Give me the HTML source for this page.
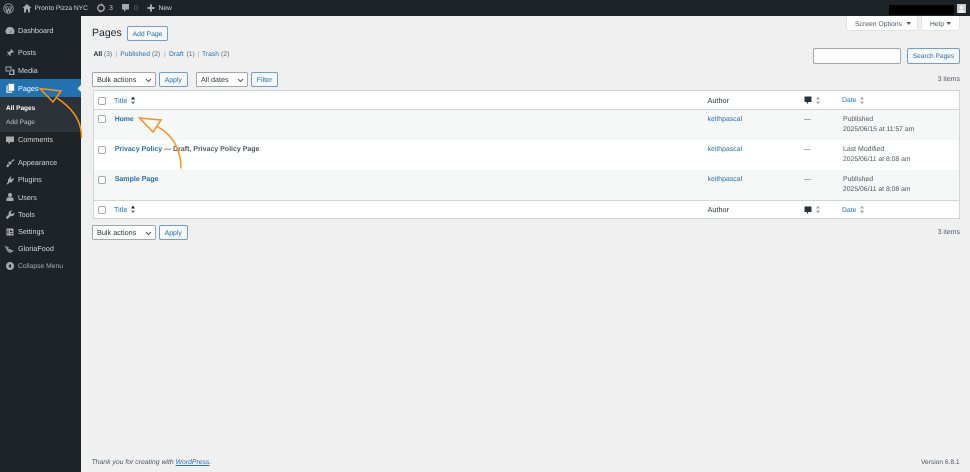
<!DOCTYPE html>
<html><head><meta charset="utf-8"><title>Pages</title>
<style>
html,body{margin:0;padding:0;width:970px;height:472px;overflow:hidden;background:#f0f0f1}
body{font-family:"Liberation Sans",sans-serif;position:relative;color:#3c434a;text-rendering:geometricPrecision}
#w{position:absolute;left:0;top:0;width:970px;height:472px;background:#f0f0f1;filter:blur(.35px)}
.t{position:absolute;white-space:nowrap;line-height:10px;font-size:6.85px}
.a{color:#2271b1}.m{color:#d4d6d8;font-size:7.25px}.s{color:#50575e}.d{color:#2c3338}
.b{font-weight:bold}
.box{position:absolute;box-sizing:border-box}
.btn{position:absolute;box-sizing:border-box;border:1px solid #6f9fcb;border-radius:2px;background:#f6f7f7;color:#2271b1;font-size:6.8px;text-align:center;white-space:nowrap}
.sel{position:absolute;box-sizing:border-box;border:1px solid #a4a6aa;border-radius:2px;background:#fff;color:#2c3338;font-size:7.3px;padding-left:4px;white-space:nowrap}
.sel svg{position:absolute;right:3px;top:5px}
.cb{position:absolute;box-sizing:border-box;width:8px;height:8px;border:1px solid #a9abaf;border-radius:2px;background:#fff}
svg.i{position:absolute}
</style></head><body><div id="w">

<div class="box" style="left:0;top:0;width:970px;height:16px;background:#1d2327"></div>
<div class="box" style="left:0;top:16px;width:81px;height:456px;background:#1d2327"></div>
<div class="box" style="left:0;top:79px;width:81px;height:18px;background:#2271b1"></div>
<div class="box" style="left:0;top:97px;width:81px;height:35px;background:#2c3338"></div>
<svg class="i" style="left:76.500px;top:84px" width="5" height="9"><path d="M5 0V9L.5 4.500Z" fill="#f0f0f1"/></svg>

<!-- Admin bar -->
<svg class="i" style="left:3px;top:3px" width="11" height="11" viewBox="0 0 22 22"><circle cx="11" cy="11" r="9.500" fill="none" stroke="#a7aaad" stroke-width="1.600"/><path d="M4.500 7.500 8.500 18 11 11 13.500 18 17.500 7.500M7 7.500H10M12 7.500H15" fill="none" stroke="#a7aaad" stroke-width="2"/></svg>
<svg class="i" style="left:22px;top:3px" width="10" height="10" viewBox="0 0 10 10"><path d="M5 1 .5 5H2V9.500H4V6.500H6V9.500H8V5H9.500Z" fill="#a7aaad"/></svg>
<span class="t m" style="left:34.500px;top:4px;font-size:6.640px">Pronto Pizza NYC</span>
<svg class="i" style="left:96px;top:3px" width="10" height="10" viewBox="0 0 10 10"><circle cx="5" cy="5" r="3.200" fill="none" stroke="#a7aaad" stroke-width="1.400"/><path d="M5 0 7 2 5 3ZM5 10 3 8 5 7Z" fill="#a7aaad"/></svg>
<span class="t" style="left:109px;top:4px;font-size:7px;color:#c3c4c7">3</span>
<svg class="i" style="left:121px;top:3px" width="9" height="10" viewBox="0 0 9 10"><path d="M1 1H8V6.500H5L3 9V6.500H1Z" fill="#a7aaad"/></svg>
<span class="t" style="left:134px;top:4px;font-size:7px;color:#72777c">0</span>
<svg class="i" style="left:146px;top:3px" width="10" height="10" viewBox="0 0 10 10"><path d="M4 1.500H6V4H8.500V6H6V8.500H4V6H1.500V4H4Z" fill="#a7aaad"/></svg>
<span class="t m" style="left:158.500px;top:4px;font-size:6.700px">New</span>
<div class="box" style="left:889px;top:5px;width:65px;height:10px;background:#000"></div>
<div class="box" style="left:957px;top:4px;width:9px;height:9px;background:#c9cacb"></div>
<svg class="i" style="left:957px;top:4px" width="9" height="9"><circle cx="4.500" cy="3.300" r="1.900" fill="#f2f2f2"/><path d="M1.500 9C1.500 6.500 3 5.500 4.500 5.500S7.500 6.500 7.500 9Z" fill="#f2f2f2"/></svg>

<!-- Sidebar -->
<svg class="i" style="left:5px;top:26px" width="10" height="10" viewBox="0 0 10 10"><path d="M5 1A4.300 4.300 0 0 0 1.500 8H8.500A4.300 4.300 0 0 0 5 1ZM5 6.800 6.800 3.200 5.700 6.900Z" fill="#a7aaad"/></svg>
<span class="t m" style="left:18px;top:26px">Dashboard</span>
<svg class="i" style="left:5px;top:48px" width="10" height="10" viewBox="0 0 10 10"><path d="M5.800 .8 9 4 8 4.700 7 4.200 5.500 6 5.700 7.500 5 8 3.500 6.300 1 9 3.500 5.500 2 4.500 2.600 3.800 4 4 5.800 2.500Z" fill="#a7aaad"/></svg>
<span class="t m" style="left:18px;top:48px">Posts</span>
<svg class="i" style="left:5px;top:66px" width="10" height="10" viewBox="0 0 10 10"><path d="M1 1H6V5H1Z" fill="none" stroke="#a7aaad"/><path d="M7 3.500H9.500V9H4V6.500H5.500V8H8V5H7Z" fill="#a7aaad"/></svg>
<span class="t m" style="left:18px;top:66px">Media</span>
<svg class="i" style="left:5px;top:83px" width="10" height="10" viewBox="0 0 10 10"><path d="M3.500 .8H9.200V7.800H3.500Z" fill="#fff"/><path d="M2 2.500V9.200H7" fill="none" stroke="#fff" stroke-width="1.100"/></svg>
<span class="t m" style="left:18px;top:83.500px;color:#fff">Pages</span>
<span class="t b" style="left:6px;top:103.500px;color:#fff;font-size:6.500px">All Pages</span>
<span class="t" style="left:6px;top:117.500px;color:#c3c4c7;font-size:6.600px">Add Page</span>
<svg class="i" style="left:5px;top:135px" width="10" height="10" viewBox="0 0 10 10"><path d="M1 1.500H9V7H5.500L3.500 9.300V7H1Z" fill="#a7aaad"/></svg>
<span class="t m" style="left:18px;top:135px">Comments</span>
<svg class="i" style="left:5px;top:158px" width="10" height="10" viewBox="0 0 10 10"><path d="M8.800 .8 9.300 2.500 6 4.500 6.800 5.500 5 7 3 5 4.500 3.300 5.500 4ZM2.500 5.500 4.500 7.500 3 9.300 .8 8.500 2 7.500Z" fill="#a7aaad"/></svg>
<span class="t m" style="left:18px;top:158px">Appearance</span>
<svg class="i" style="left:5px;top:175px" width="10" height="10" viewBox="0 0 10 10"><path d="M5.500 1.500 6.500 2 5.500 3.500 7 4.500 8 3 9 3.800 7.800 5.800 6.800 7.500 4.800 7.300 2.800 9.200H1.500L3 6.800 3 4.800 Z" fill="#a7aaad"/></svg>
<span class="t m" style="left:18px;top:175px">Plugins</span>
<svg class="i" style="left:5px;top:192px" width="10" height="10" viewBox="0 0 10 10"><circle cx="5" cy="3" r="2" fill="#a7aaad"/><path d="M1.500 9V7C1.500 5.800 3 5.300 5 5.300S8.500 5.800 8.500 7V9Z" fill="#a7aaad"/></svg>
<span class="t m" style="left:18px;top:192.500px">Users</span>
<svg class="i" style="left:5px;top:210px" width="10" height="10" viewBox="0 0 10 10"><path d="M9.200 2.500 7.500 4 6 3.500 5.700 2 7.500 .7A2.800 2.800 0 0 0 3.800 4.200L.8 7.500 2.300 9.200 5.500 6A2.800 2.800 0 0 0 9.200 2.500Z" fill="#a7aaad"/></svg>
<span class="t m" style="left:18px;top:210px">Tools</span>
<svg class="i" style="left:5px;top:227px" width="10" height="10" viewBox="0 0 10 10"><path d="M1.500 1.500H8.500V8.500H1.500Z" fill="#a7aaad"/><path d="M3 3V7M5.500 3V4.500H7.500M5.500 6.500H7.500" stroke="#1d2327" stroke-width=".9" fill="none"/></svg>
<span class="t m" style="left:18px;top:227px">Settings</span>
<svg class="i" style="left:4px;top:244px" width="11" height="10" viewBox="0 0 11 10"><path d="M.5 1.500 5 3.500 4 5 6 5 10 7 6 9 3.500 7.500Z" fill="#8c9094"/></svg>
<span class="t m" style="left:18px;top:244px">GloriaFood</span>
<svg class="i" style="left:5px;top:261px" width="10" height="10" viewBox="0 0 10 10"><circle cx="5" cy="5" r="4" fill="#a7aaad"/><path d="M6 2.800V7.200L3.200 5Z" fill="#1d2327"/></svg>
<span class="t" style="left:18px;top:262px;color:#a7aaad;font-size:6.750px">Collapse Menu</span>

<!-- Header -->
<span class="t" style="left:92px;top:27px;font-size:10.500px;line-height:12px;color:#1d2327">Pages</span>
<div class="btn" style="left:127px;top:26px;width:41px;height:15px;line-height:15px">Add Page</div>
<div class="box" style="left:846px;top:16px;width:72px;height:15px;background:#fff;border:1px solid #e2e2e4;border-top:0;border-radius:0 0 3px 3px"></div>
<span class="t s" style="left:855px;top:19.500px;font-size:6.820px">Screen Options</span>
<svg class="i" style="left:905.500px;top:22px" width="6" height="4"><path d="M.5 0H5L2.750 3Z" fill="#50575e"/></svg>
<div class="box" style="left:921px;top:16px;width:39px;height:15px;background:#fff;border:1px solid #e2e2e4;border-top:0;border-radius:0 0 3px 3px"></div>
<span class="t s" style="left:930px;top:19.500px;font-size:6.820px">Help</span>
<svg class="i" style="left:946px;top:22px" width="6" height="4"><path d="M.5 0H5L2.750 3Z" fill="#50575e"/></svg>

<span class="t b" style="left:93.500px;top:50px;font-size:6.800px;color:#1d2327">All</span>
<span class="t" style="left:104px;top:50px;font-size:6.800px;color:#646970">(3)</span>
<span class="t" style="left:115.500px;top:50px;font-size:6.800px;color:#a7aaad">|</span>
<span class="t a" style="left:120.300px;top:50px;font-size:6.760px">Published</span>
<span class="t" style="left:152px;top:50px;font-size:6.800px;color:#646970">(2)</span>
<span class="t" style="left:164px;top:50px;font-size:6.800px;color:#a7aaad">|</span>
<span class="t a" style="left:169px;top:50px;font-size:6.760px">Draft</span>
<span class="t" style="left:186.500px;top:50px;font-size:6.800px;color:#646970">(1)</span>
<span class="t" style="left:197.500px;top:50px;font-size:6.800px;color:#a7aaad">|</span>
<span class="t a" style="left:202px;top:50px;font-size:6.760px">Trash</span>
<span class="t" style="left:221px;top:50px;font-size:6.800px;color:#646970">(2)</span>

<div class="box" style="left:813px;top:48px;width:88px;height:16px;background:#fff;border:1px solid #a4a6aa;border-radius:2px"></div>
<div class="btn" style="left:907px;top:48px;width:53px;height:16px;line-height:15.500px;font-size:6.600px">Search Pages</div>
<span class="t s" style="left:937.700px;top:75px;font-size:6.900px">3 items</span>

<div class="sel" style="left:92px;top:71.500px;width:64px;height:15.500px;line-height:13.500px">Bulk actions<svg width="7" height="5"><path d="M1 1 3.500 3.500 6 1" fill="none" stroke="#50575e" stroke-width="1"/></svg></div>
<div class="btn" style="left:159px;top:71.500px;width:28.500px;height:15.500px;line-height:15.500px;font-size:6.900px">Apply</div>
<div class="sel" style="left:196px;top:71.500px;width:52px;height:15.500px;line-height:13.500px;font-size:7.200px">All dates<svg width="7" height="5"><path d="M1 1 3.500 3.500 6 1" fill="none" stroke="#50575e" stroke-width="1"/></svg></div>
<div class="btn" style="left:251px;top:71.500px;width:27px;height:15.500px;line-height:15.500px;font-size:7px">Filter</div>

<!-- Table -->
<div class="box" style="left:92.500px;top:90px;width:867px;height:129px;background:#fff;border:1px solid #d3d4d6"></div>
<div class="box" style="left:93.500px;top:108.500px;width:865px;height:31.500px;background:#f6f7f7;border-top:1px solid #d3d4d6"></div>
<div class="box" style="left:93.500px;top:170px;width:865px;height:30px;background:#f6f7f7"></div>
<div class="box" style="left:93.500px;top:200px;width:865px;height:1px;background:#d3d4d6"></div>

<div class="cb" style="left:98px;top:97px"></div>
<div class="cb" style="left:98px;top:115px"></div>
<div class="cb" style="left:98px;top:145.500px"></div>
<div class="cb" style="left:98px;top:176px"></div>
<div class="cb" style="left:98px;top:206px"></div>

<span class="t a" style="left:114px;top:95.500px;font-size:7.200px">Title</span>
<svg class="i" style="left:130px;top:95.500px" width="6" height="9"><path d="M3 .5 5 3.500H1Z" fill="#1d2327"/><path d="M3 8.500 5 5.500H1Z" fill="#787c82"/></svg>
<span class="t d" style="left:707.500px;top:95.500px;font-size:7.300px">Author</span>
<svg class="i" style="left:803.500px;top:96px" width="8" height="9" viewBox="0 0 8 9"><path d="M.5.500H7.500V6H4.500L3 8.500V6H.5Z" fill="#2c3338"/></svg>
<svg class="i" style="left:815px;top:95.500px" width="6" height="9"><path d="M3 .5 5 3.500H1ZM3 8.500 5 5.500H1Z" fill="#a7aaad"/></svg>
<span class="t a" style="left:842px;top:96px;font-size:6.800px">Date</span>
<svg class="i" style="left:859px;top:95.500px" width="6" height="9"><path d="M3 .5 5 3.500H1ZM3 8.500 5 5.500H1Z" fill="#a7aaad"/></svg>

<span class="t a b" style="left:114.700px;top:114.600px;font-size:6.850px">Home</span>
<span class="t a" style="left:707.500px;top:114.600px;font-size:6.930px">keithpascal</span>
<span class="t s" style="left:804px;top:114.600px">—</span>
<span class="t s" style="left:843px;top:114.600px">Published</span>
<span class="t s" style="left:843px;top:124.600px;font-size:6.800px">2025/06/15 at 11:57 am</span>

<span class="t s b" style="left:114.700px;top:144.500px;font-size:7px"><span class="a">Privacy Policy</span> — Draft, Privacy Policy Page</span>
<span class="t a" style="left:707.500px;top:144.500px;font-size:6.930px">keithpascal</span>
<span class="t s" style="left:804px;top:144.500px">—</span>
<span class="t s" style="left:843px;top:144.500px;font-size:6.950px">Last Modified</span>
<span class="t s" style="left:843px;top:154.500px;font-size:6.800px">2025/06/11 at 8:08 am</span>

<span class="t a b" style="left:114.700px;top:175px;font-size:7.050px">Sample Page</span>
<span class="t a" style="left:707.500px;top:175px;font-size:6.930px">keithpascal</span>
<span class="t s" style="left:804px;top:175px">—</span>
<span class="t s" style="left:843px;top:175px">Published</span>
<span class="t s" style="left:843px;top:185px;font-size:6.800px">2025/06/11 at 8:08 am</span>

<span class="t a" style="left:114px;top:205px;font-size:7.200px">Title</span>
<svg class="i" style="left:130px;top:205px" width="6" height="9"><path d="M3 .5 5 3.500H1Z" fill="#1d2327"/><path d="M3 8.500 5 5.500H1Z" fill="#787c82"/></svg>
<span class="t d" style="left:707.500px;top:205px;font-size:7.300px">Author</span>
<svg class="i" style="left:803.500px;top:205.500px" width="8" height="9" viewBox="0 0 8 9"><path d="M.5.500H7.500V6H4.500L3 8.500V6H.5Z" fill="#2c3338"/></svg>
<svg class="i" style="left:815px;top:205px" width="6" height="9"><path d="M3 .5 5 3.500H1ZM3 8.500 5 5.500H1Z" fill="#a7aaad"/></svg>
<span class="t a" style="left:842px;top:205.500px;font-size:6.800px">Date</span>
<svg class="i" style="left:859px;top:205px" width="6" height="9"><path d="M3 .5 5 3.500H1ZM3 8.500 5 5.500H1Z" fill="#a7aaad"/></svg>

<div class="sel" style="left:92px;top:224.500px;width:64px;height:15.500px;line-height:13.500px">Bulk actions<svg width="7" height="5"><path d="M1 1 3.500 3.500 6 1" fill="none" stroke="#50575e" stroke-width="1"/></svg></div>
<div class="btn" style="left:159px;top:224.500px;width:28.500px;height:15.500px;line-height:15.500px;font-size:6.900px">Apply</div>
<span class="t s" style="left:937.700px;top:228px;font-size:6.900px">3 items</span>

<span class="t" style="left:91.500px;top:458px;font-size:6.850px;font-style:italic;color:#50575e">Thank you for creating with <span class="a" style="text-decoration:underline">WordPress</span>.</span>
<span class="t" style="left:921px;top:458px;font-size:6.620px;color:#50575e">Version 6.8.1</span>

<!-- Orange annotation arrows -->
<svg class="i" style="left:0;top:0" width="970" height="472" fill="none" stroke="#f7931e" stroke-width="1.500">
<path d="M40 88.500 61 91 53 102Z"/>
<path d="M57 98C69 106 82 118 81.500 138"/>
<path d="M139.500 118 161 120 153 132Z"/>
<path d="M156 126C169 132 181 146 181 168.500"/>
</svg>
</div></body></html>
